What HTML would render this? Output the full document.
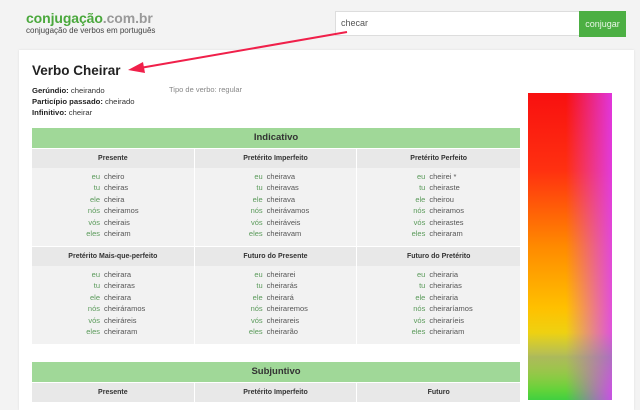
<!DOCTYPE html>
<html><head><meta charset="utf-8"><style>
*{margin:0;padding:0;box-sizing:border-box}
body{width:640px;height:400px;overflow:hidden;background:#f3f3f3;font-family:"Liberation Sans",Arial,sans-serif;position:relative;color:#333}
.logo{position:absolute;left:26px;top:10px;font-size:14px;font-weight:bold;color:#4aa83c;letter-spacing:-0.1px}
.logo span{color:#999}
.sub{position:absolute;left:26px;top:26px;font-size:8px;color:#444}
.search{position:absolute;left:335px;top:11px;width:245px;height:25px;background:#fff;border:1px solid #ddd;font-size:9px;color:#555;padding:6px 5px}
.btn{position:absolute;left:579px;top:11px;width:47px;height:26px;background:#4caf43;color:#e8f6e6;font-size:9px;text-align:center;line-height:26px}
.card{position:absolute;left:19px;top:50px;width:615px;height:360px;background:#fff;box-shadow:0 0 2px #ddd}
h1{position:absolute;left:32px;top:63px;font-size:13.5px;color:#222}
.info{position:absolute;left:32px;top:85px;font-size:7.7px;line-height:11px;color:#333}
.info b{color:#222}
.tipo{position:absolute;left:169px;top:85px;font-size:7.5px;color:#888}
.tbl{position:absolute;left:32px;width:488px}
.gh{background:#a0d898;height:20px;text-align:center;font-size:9.5px;font-weight:bold;color:#333;line-height:20px}
.row{display:flex}
.col{width:162px;margin-right:1px;background:#f2f2f2}
.col:last-child{margin-right:0;width:163px}
.ch{background:#e8e8e8;height:20px;text-align:center;font-size:7px;font-weight:bold;color:#333;line-height:20px;border-top:1px solid #fff}
.lines{padding:3px 0 4px;font-size:7.5px;line-height:11.4px;height:78px}
.l{display:flex}
.p{width:72px;text-align:right;padding-right:4px;color:#5a9a5a}
.v{color:#555}
.ad{position:absolute;left:528px;top:93px;width:84px;height:307px;background:linear-gradient(180deg,rgba(0,0,0,0) 78%,rgba(120,140,160,.45) 86%,rgba(0,0,0,0) 97%),linear-gradient(90deg,rgba(255,0,0,0) 45%,rgba(220,60,255,.85) 100%),linear-gradient(180deg,#f81010 0%,#ff3010 25%,#ff8a00 50%,#ffc000 70%,#e0e020 85%,#40d040 100%)}
</style></head><body>
<div class="logo">conjugação<span>.com.br</span></div>
<div class="sub">conjugação de verbos em português</div>
<div class="search">checar</div>
<div class="btn">conjugar</div>
<div class="card"></div>
<h1>Verbo Cheirar</h1>
<div class="info"><b>Gerúndio:</b> cheirando<br><b>Particípio passado:</b> cheirado<br><b>Infinitivo:</b> cheirar</div>
<div class="tipo">Tipo de verbo: regular</div>
<div class="tbl" style="top:128px">
<div class="gh">Indicativo</div>
<div class="row">
<div class="col"><div class="ch">Presente</div><div class="lines">
<div class="l"><span class="p">eu</span><span class="v">cheiro</span></div><div class="l"><span class="p">tu</span><span class="v">cheiras</span></div><div class="l"><span class="p">ele</span><span class="v">cheira</span></div><div class="l"><span class="p">nós</span><span class="v">cheiramos</span></div><div class="l"><span class="p">vós</span><span class="v">cheirais</span></div><div class="l"><span class="p">eles</span><span class="v">cheiram</span></div></div></div>
<div class="col"><div class="ch">Pretérito Imperfeito</div><div class="lines">
<div class="l"><span class="p">eu</span><span class="v">cheirava</span></div><div class="l"><span class="p">tu</span><span class="v">cheiravas</span></div><div class="l"><span class="p">ele</span><span class="v">cheirava</span></div><div class="l"><span class="p">nós</span><span class="v">cheirávamos</span></div><div class="l"><span class="p">vós</span><span class="v">cheiráveis</span></div><div class="l"><span class="p">eles</span><span class="v">cheiravam</span></div></div></div>
<div class="col"><div class="ch">Pretérito Perfeito</div><div class="lines">
<div class="l"><span class="p">eu</span><span class="v">cheirei *</span></div><div class="l"><span class="p">tu</span><span class="v">cheiraste</span></div><div class="l"><span class="p">ele</span><span class="v">cheirou</span></div><div class="l"><span class="p">nós</span><span class="v">cheiramos</span></div><div class="l"><span class="p">vós</span><span class="v">cheirastes</span></div><div class="l"><span class="p">eles</span><span class="v">cheiraram</span></div></div></div>
</div>
<div class="row">
<div class="col"><div class="ch">Pretérito Mais-que-perfeito</div><div class="lines">
<div class="l"><span class="p">eu</span><span class="v">cheirara</span></div><div class="l"><span class="p">tu</span><span class="v">cheiraras</span></div><div class="l"><span class="p">ele</span><span class="v">cheirara</span></div><div class="l"><span class="p">nós</span><span class="v">cheiráramos</span></div><div class="l"><span class="p">vós</span><span class="v">cheiráreis</span></div><div class="l"><span class="p">eles</span><span class="v">cheiraram</span></div></div></div>
<div class="col"><div class="ch">Futuro do Presente</div><div class="lines">
<div class="l"><span class="p">eu</span><span class="v">cheirarei</span></div><div class="l"><span class="p">tu</span><span class="v">cheirarás</span></div><div class="l"><span class="p">ele</span><span class="v">cheirará</span></div><div class="l"><span class="p">nós</span><span class="v">cheiraremos</span></div><div class="l"><span class="p">vós</span><span class="v">cheirareis</span></div><div class="l"><span class="p">eles</span><span class="v">cheirarão</span></div></div></div>
<div class="col"><div class="ch">Futuro do Pretérito</div><div class="lines">
<div class="l"><span class="p">eu</span><span class="v">cheiraria</span></div><div class="l"><span class="p">tu</span><span class="v">cheirarias</span></div><div class="l"><span class="p">ele</span><span class="v">cheiraria</span></div><div class="l"><span class="p">nós</span><span class="v">cheiraríamos</span></div><div class="l"><span class="p">vós</span><span class="v">cheiraríeis</span></div><div class="l"><span class="p">eles</span><span class="v">cheirariam</span></div></div></div>
</div>
</div>
<div class="tbl" style="top:362px">
<div class="gh">Subjuntivo</div>
<div class="row">
<div class="col"><div class="ch">Presente</div></div>
<div class="col"><div class="ch">Pretérito Imperfeito</div></div>
<div class="col"><div class="ch">Futuro</div></div>
</div></div>
<div class="ad"></div>
<svg style="position:absolute;left:0;top:0" width="640" height="400"><line x1="347" y1="32" x2="140" y2="68" stroke="#f0204a" stroke-width="2"/><polygon points="128,70 143,62 145,73" fill="#f0204a"/></svg>
</body></html>
